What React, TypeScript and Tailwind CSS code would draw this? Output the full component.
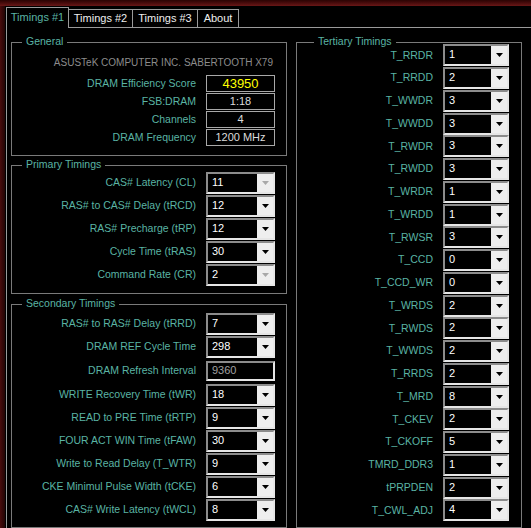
import React from 'react';

const FONT = { fontFamily: '"Liberation Sans", Arial, sans-serif' };

function Arrow({ disabled }: { disabled?: boolean }) {
  return (
    <svg width="7" height="4" viewBox="0 0 7 4">
      <polygon points="0,0 7,0 3.5,4" fill={disabled ? '#a8a8a8' : '#000'} />
    </svg>
  );
}

function Combo({ value, disabled, wide }: { value: string; disabled?: boolean; wide?: boolean }) {
  return (
    <div
      className={`flex h-[22px] ${wide ? 'w-[69px]' : 'w-[66px]'} border-2 border-t-[#8c8c8c] border-l-[#8c8c8c] border-r-[#e6e6e6] border-b-[#e6e6e6] bg-black`}
    >
      <div className="flex-1 pl-[4px] text-[11px] leading-[16px] text-white">{value}</div>
      <div className="flex w-[16px] items-center justify-center bg-[#eeeeee]">
        <Arrow disabled={disabled} />
      </div>
    </div>
  );
}

function Group({
  title,
  titleLeft,
  className,
  children,
}: {
  title: string;
  titleLeft: string;
  className: string;
  children: React.ReactNode;
}) {
  return (
    <div className={`relative border border-[#7a7a7a] ${className}`}>
      <span
        className={`absolute -top-[8px] ${titleLeft} bg-black px-[4px] text-[10.5px] leading-[13px] text-[#5ab4a4]`}
      >
        {title}
      </span>
      {children}
    </div>
  );
}

function InfoRow({ label, value, yellow }: { label: string; value: string; yellow?: boolean }) {
  return (
    <div className="flex h-[18px]">
      <div className="flex h-[17px] w-[194px] items-center justify-end pr-[10px] text-[10.5px] text-[#5ab4a4]">
        {label}
      </div>
      <div
        className={`flex h-[17px] w-[69px] items-center justify-center border border-[#a8a8a8] ${
          yellow ? 'text-[13px] text-[#ffff00]' : 'text-[11px] text-[#dcdcdc]'
        }`}
      >
        {value}
      </div>
    </div>
  );
}

function TimingRow({ label, value, disabled }: { label: string; value: string; disabled?: boolean }) {
  return (
    <div className="flex h-[23px] items-center">
      <div className="w-[194px] pr-[10px] text-right text-[10.5px] text-[#5ab4a4]">{label}</div>
      <Combo value={value} disabled={disabled} wide />
    </div>
  );
}

const primary = [
  { label: 'CAS# Latency (CL)', value: '11', disabled: true },
  { label: 'RAS# to CAS# Delay (tRCD)', value: '12' },
  { label: 'RAS# Precharge (tRP)', value: '12' },
  { label: 'Cycle Time (tRAS)', value: '30' },
  { label: 'Command Rate (CR)', value: '2', disabled: true },
];

const secondaryTop = [
  { label: 'RAS# to RAS# Delay (tRRD)', value: '7' },
  { label: 'DRAM REF Cycle Time', value: '298' },
];

const secondaryBottom = [
  { label: 'WRITE Recovery Time (tWR)', value: '18' },
  { label: 'READ to PRE Time (tRTP)', value: '9' },
  { label: 'FOUR ACT WIN Time (tFAW)', value: '30' },
  { label: 'Write to Read Delay (T_WTR)', value: '9' },
  { label: 'CKE Minimul Pulse Width (tCKE)', value: '6' },
  { label: 'CAS# Write Latency (tWCL)', value: '8' },
];

const tertiary: [string, string][] = [
  ['T_RRDR', '1'],
  ['T_RRDD', '2'],
  ['T_WWDR', '3'],
  ['T_WWDD', '3'],
  ['T_RWDR', '3'],
  ['T_RWDD', '3'],
  ['T_WRDR', '1'],
  ['T_WRDD', '1'],
  ['T_RWSR', '3'],
  ['T_CCD', '0'],
  ['T_CCD_WR', '0'],
  ['T_WRDS', '2'],
  ['T_RWDS', '2'],
  ['T_WWDS', '2'],
  ['T_RRDS', '2'],
  ['T_MRD', '8'],
  ['T_CKEV', '2'],
  ['T_CKOFF', '5'],
  ['TMRD_DDR3', '1'],
  ['tPRPDEN', '2'],
  ['T_CWL_ADJ', '4'],
];

export default function App() {
  return (
    <div className="flex h-[528px] w-[531px] flex-col overflow-hidden bg-black" style={FONT}>
      {/* window frame top */}
      <div className="h-[6px] bg-linear-to-b from-[#2a0404] to-[#6a1717]" />
      <div className="flex flex-1">
        {/* window frame left */}
        <div className="w-[5px] bg-linear-to-r from-[#4a0c0c] to-[#220505]" />
        <div className="flex flex-1 flex-col">
          {/* tabs */}
          <div className="ml-[1px] flex h-[22px] items-end text-[11px]">
            <div className="flex h-[21px] w-[63px] items-center justify-center border-x border-t border-[#9a9a9a] pb-[2px] text-[#5ab4a4]">
              Timings #1
            </div>
            <div className="flex h-[19px] w-[64px] items-center justify-center border-y border-r border-[#9a9a9a] text-[#eeeeee]">
              Timings #2
            </div>
            <div className="flex h-[19px] w-[65px] items-center justify-center border-y border-r border-[#9a9a9a] text-[#eeeeee]">
              Timings #3
            </div>
            <div className="flex h-[19px] w-[41px] items-center justify-center border-y border-r border-[#9a9a9a] text-[#eeeeee]">
              About
            </div>
            <div className="h-[1px] flex-1 bg-[#9a9a9a]" />
          </div>

          {/* tab page */}
          <div className="ml-[1px] flex flex-1 border-l border-[#9a9a9a]">
            <div className="ml-[4px] flex w-[276px] flex-col">
              <Group title="General" titleLeft="left-[10px]" className="mt-[14px] h-[114px]">
                <div className="pt-[13px] pr-[13px] text-right text-[10px] leading-[14px] text-[#8c8c8c]">
                  ASUSTeK COMPUTER INC. SABERTOOTH X79
                </div>
                <div className="mt-[5px] flex flex-col">
                  <InfoRow label="DRAM Efficiency Score" value="43950" yellow />
                  <InfoRow label="FSB:DRAM" value="1:18" />
                  <InfoRow label="Channels" value="4" />
                  <InfoRow label="DRAM Frequency" value="1200 MHz" />
                </div>
              </Group>

              <Group title="Primary Timings" titleLeft="left-[10px]" className="mt-[9px] h-[129px]">
                <div className="flex flex-col pt-[5px]">
                  {primary.map((r) => (
                    <TimingRow key={r.label} label={r.label} value={r.value} disabled={r.disabled} />
                  ))}
                </div>
              </Group>

              <Group title="Secondary Timings" titleLeft="left-[10px]" className="mt-[10px] h-[224px]">
                <div className="flex flex-col pt-[7px]">
                  {secondaryTop.map((r) => (
                    <TimingRow key={r.label} label={r.label} value={r.value} />
                  ))}
                  <div className="flex h-[25px] items-center">
                    <div className="w-[194px] pr-[10px] text-right text-[10.5px] text-[#5ab4a4]">
                      DRAM Refresh Interval
                    </div>
                    <div className="flex h-[20px] w-[69px] items-center border-2 border-t-[#8c8c8c] border-l-[#8c8c8c] border-r-[#e6e6e6] border-b-[#e6e6e6] pl-[4px] text-[11px] text-[#a0a0a0]">
                      9360
                    </div>
                  </div>
                  {secondaryBottom.map((r) => (
                    <TimingRow key={r.label} label={r.label} value={r.value} />
                  ))}
                </div>
              </Group>
            </div>

            <Group title="Tertiary Timings" titleLeft="left-[17px]" className="mt-[14px] ml-[9px] h-[486px] w-[226px]">
              <div className="flex flex-col pt-[1px]">
                {tertiary.map(([label, value]) => (
                  <div key={label} className="flex h-[22.75px] items-center">
                    <div className="w-[146px] pr-[10px] text-right text-[10.5px] text-[#5ab4a4]">{label}</div>
                    <Combo value={value} />
                  </div>
                ))}
              </div>
            </Group>
          </div>
        </div>
      </div>
    </div>
  );
}
